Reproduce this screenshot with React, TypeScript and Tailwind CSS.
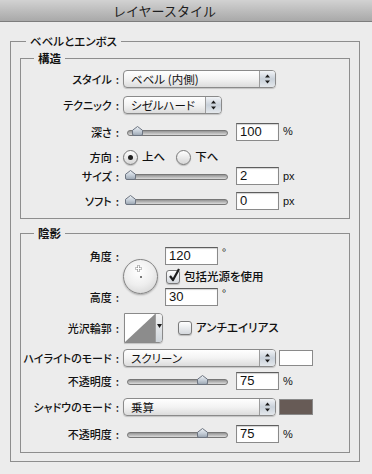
import React from "react";

// ---------------- small aqua bits ----------------
const Label = ({ text }: { text: string }) => (
  <div className="flex w-[102px] shrink-0 justify-end whitespace-nowrap text-[11px] leading-[14px] font-medium text-[#111]">
    {text}
    <span className="ml-[4px] mr-[4px]">:</span>
  </div>
);

const Arrows = () => (
  <svg width="7" height="10" viewBox="0 0 7 10">
    <path d="M3.5 0.5 L6 3.5 L1 3.5 Z" fill="#1a1a1a" />
    <path d="M3.5 9.5 L6 6.5 L1 6.5 Z" fill="#1a1a1a" />
  </svg>
);

const Select = ({ text, w }: { text: string; w: string }) => (
  <div
    className={`flex h-[18px] ${w} shrink-0 overflow-hidden rounded-[4px] border border-[#8a8a8a] bg-gradient-to-b from-white via-[#f3f3f3] to-[#dcdcdc] shadow-[0_1px_1px_rgba(0,0,0,0.18)]`}
  >
    <div className="flex-1 pl-[7px] text-[11.5px] leading-[16px] text-[#111]">{text}</div>
    <div className="flex w-[16px] items-center justify-center border-l border-[#9c9c9c] bg-gradient-to-b from-[#f2f4f7] via-[#c9d1da] to-[#e4e8ec]">
      <Arrows />
    </div>
  </div>
);

const NumBox = ({ value, w = "w-[43px]" }: { value: string; w?: string }) => (
  <div
    className={`h-[18px] ${w} shrink-0 border border-[#8a8a8a] border-t-[#5e5e5e] bg-white pl-[3px] font-['Liberation_Sans',sans-serif] text-[13px] leading-[16px] text-[#111] shadow-[inset_0_1px_1px_rgba(0,0,0,0.18)]`}
  >
    {value}
  </div>
);

const Thumb = () => (
  <svg width="11" height="10" viewBox="0 0 11 10">
    <defs>
      <linearGradient id="tg" x1="0" y1="0" x2="0" y2="1">
        <stop offset="0" stopColor="#eef2f6" />
        <stop offset="0.55" stopColor="#c3ccd6" />
        <stop offset="1" stopColor="#9aa5b1" />
      </linearGradient>
    </defs>
    <path
      d="M5.5 0.5 L10.5 4.3 L10.5 8 Q10.5 9.5 9 9.5 L2 9.5 Q0.5 9.5 0.5 8 L0.5 4.3 Z"
      fill="url(#tg)"
      stroke="#6c7480"
    />
  </svg>
);

const Slider = ({ pos }: { pos: number }) => (
  <div className="relative mb-[2px] h-[10px] w-[101px]">
    <div className="absolute left-0 right-0 top-[4px] h-[6px] rounded-full border border-[#777] bg-gradient-to-b from-[#949494] to-[#dcdcdc]" />
    <div className="absolute top-0" style={{ left: pos - 5 }}>
      <Thumb />
    </div>
  </div>
);

const SliderRow = ({
  label,
  pos,
  value,
  unit,
  cls,
}: {
  label: string;
  pos: number;
  value: string;
  unit: string;
  cls: string;
}) => (
  <div className={`flex items-center ${cls}`}>
    <Label text={label} />
    <div className="w-[113px] shrink-0 pl-[4px]">
      <Slider pos={pos} />
    </div>
    <NumBox value={value} />
    <span className="ml-[4px] font-['Liberation_Sans',sans-serif] text-[11px] text-[#111]">{unit}</span>
  </div>
);

const Radio = ({ on }: { on?: boolean }) => (
  <div className="flex h-[15px] w-[15px] shrink-0 items-center justify-center rounded-full border border-[#787878] bg-gradient-to-b from-white to-[#d6d6d6] shadow-[0_1px_1px_rgba(0,0,0,0.2)]">
    {on && <div className="h-[5px] w-[5px] rounded-full bg-[#222]" />}
  </div>
);

const Check = ({ on }: { on?: boolean }) => (
  <div className="relative h-[14px] w-[14px] shrink-0 rounded-[3px] border border-[#7a7a7a] bg-gradient-to-b from-white to-[#d4d8dd] shadow-[0_1px_1px_rgba(0,0,0,0.2)]">
    {on && (
      <svg className="absolute -top-[3px] left-[1px]" width="13" height="15" viewBox="0 0 13 15">
        <path d="M2 8 L5 12 L11 1" fill="none" stroke="#1d1d1d" strokeWidth="2.2" strokeLinejoin="round" />
      </svg>
    )}
  </div>
);

const Dial = () => (
  <div className="relative h-[35px] w-[35px] rounded-full border border-[#838383] bg-[radial-gradient(circle_at_45%_35%,#ffffff_0%,#eeeeee_50%,#cdcdcd_100%)] shadow-[0_1px_2px_rgba(0,0,0,0.3)]">
    <svg className="absolute left-[11px] top-[5px]" width="7" height="7" viewBox="0 0 7 7">
      <path d="M3.5 0 V7 M0 3.5 H7" stroke="#8a8a8a" strokeWidth="2.2" />
      <path d="M3.5 0.5 V6.5 M0.5 3.5 H6.5" stroke="#ffffff" strokeWidth="1" />
    </svg>
    <div className="absolute left-[16px] top-[16px] h-[2px] w-[2px] bg-[#7a7a7a]" />
  </div>
);

const Contour = () => (
  <div className="ml-[1px] flex h-[30px] w-[39px] shrink-0 overflow-hidden rounded-r-[4px] border border-[#8a8a8a] shadow-[0_1px_1px_rgba(0,0,0,0.18)]">
    <svg width="30" height="28" viewBox="0 0 30 28" className="shrink-0">
      <rect width="30" height="28" fill="#ffffff" />
      <polygon points="0,28 30,0 30,28" fill="#8c8c8c" />
    </svg>
    <div className="flex flex-1 justify-center border-l border-[#a0a0a0] bg-gradient-to-b from-[#f4f4f4] to-[#cfd5db] pt-[10px]">
      <svg width="5" height="4" viewBox="0 0 5 4">
        <path d="M0 0 H5 L2.5 4 Z" fill="#1a1a1a" />
      </svg>
    </div>
  </div>
);

const Legend = ({ text, bold, cls }: { text: string; bold?: boolean; cls: string }) => (
  <legend
    className={`${cls} px-[4px] text-[11.5px] leading-[14px] text-[#111] ${bold ? "font-bold" : "font-medium"}`}
  >
    {text}
  </legend>
);

// ---------------- App ----------------
export default function App() {
  return (
    <div className="h-[474px] w-[372px] overflow-hidden bg-[#ececec] font-['Noto_Sans_CJK_JP','Noto_Sans',sans-serif] [font-feature-settings:'palt']">
      {/* title bar */}
      <div className="h-[22px] border-b border-[#7d7d7d] bg-gradient-to-b from-[#d2d2d2] to-[#a9a9a9] pl-[113px] text-[13px] leading-[21px] text-[#1e1e1e] [font-feature-settings:normal]">
        レイヤースタイル
      </div>

      <fieldset className="ml-[10px] mt-[12px] w-[350px] border border-[#8e8e8e]">
        <Legend text="ベベルとエンボス" cls="ml-[15px]" />
        <div className="px-[9px] pb-[8px]">
          {/* 構造 */}
          <fieldset className="mt-[3px] border border-[#8e8e8e]">
            <Legend text="構造" bold cls="ml-[13px]" />
            <div className="flex h-[28px] items-center">
              <Label text="スタイル" />
              <Select text="ベベル (内側)" w="w-[153px]" />
            </div>
            <div className="flex h-[24px] items-center">
              <Label text="テクニック" />
              <Select text="シゼルハード" w="w-[99px]" />
            </div>
            <SliderRow label="深さ" pos={10} value="100" unit="%" cls="h-[29px]" />
            <div className="flex h-[22px] items-center text-[11.5px] text-[#111]">
              <Label text="方向" />
              <Radio on />
              <span className="ml-[4px] font-medium">上へ</span>
              <div className="ml-[11px]">
                <Radio />
              </div>
              <span className="ml-[4px] font-medium">下へ</span>
            </div>
            <SliderRow label="サイズ" pos={3} value="2" unit="px" cls="h-[16px]" />
            <SliderRow label="ソフト" pos={3} value="0" unit="px" cls="h-[34px]" />
          </fieldset>

          {/* 陰影 */}
          <fieldset className="mt-[7px] border border-[#8e8e8e] pb-[9px]">
            <Legend text="陰影" bold cls="ml-[13px]" />
            <div className="flex">
              <div className="flex w-[102px] shrink-0 flex-col">
                <div className="mt-[7px] flex h-[18px] items-center">
                  <Label text="角度" />
                </div>
                <div className="mt-[23px] flex h-[18px] items-center">
                  <Label text="高度" />
                </div>
              </div>
              <div className="mt-[19px]">
                <Dial />
              </div>
              <div className="ml-[7px] flex flex-col">
                <div className="mt-[7px] flex">
                  <NumBox value="120" w="w-[53px]" />
                  <span className="ml-[4px] text-[11px] leading-[11px] text-[#111]">°</span>
                </div>
                <div className="mt-[5px] flex h-[14px] items-center">
                  <div className="ml-[1px]">
                    <Check on />
                  </div>
                  <span className="ml-[4px] text-[11.5px] font-medium text-[#111]">包括光源を使用</span>
                </div>
                <div className="mt-[4px] flex">
                  <NumBox value="30" w="w-[53px]" />
                  <span className="ml-[4px] text-[11px] leading-[11px] text-[#111]">°</span>
                </div>
              </div>
            </div>

            <div className="mt-[7px] flex h-[30px] items-center">
              <Label text="光沢輪郭" />
              <Contour />
              <div className="ml-[15px]">
                <Check />
              </div>
              <span className="ml-[4px] text-[11.5px] font-medium text-[#111]">アンチエイリアス</span>
            </div>

            <div className="mt-[6px] flex h-[18px] items-center">
              <Label text="ハイライトのモード" />
              <Select text="スクリーン" w="w-[153px]" />
              <div className="ml-[3px] h-[16px] w-[34px] border border-[#8a8a8a] bg-white" />
            </div>
            <SliderRow label="不透明度" pos={75} value="75" unit="%" cls="mt-[5px] h-[18px]" />

            <div className="mt-[8px] flex h-[18px] items-center">
              <Label text="シャドウのモード" />
              <Select text="乗算" w="w-[153px]" />
              <div className="ml-[3px] h-[16px] w-[34px] border border-[#8a8a8a] bg-[#675b56]" />
            </div>
            <SliderRow label="不透明度" pos={75} value="75" unit="%" cls="mt-[9px] h-[18px]" />
          </fieldset>
        </div>
      </fieldset>
    </div>
  );
}
